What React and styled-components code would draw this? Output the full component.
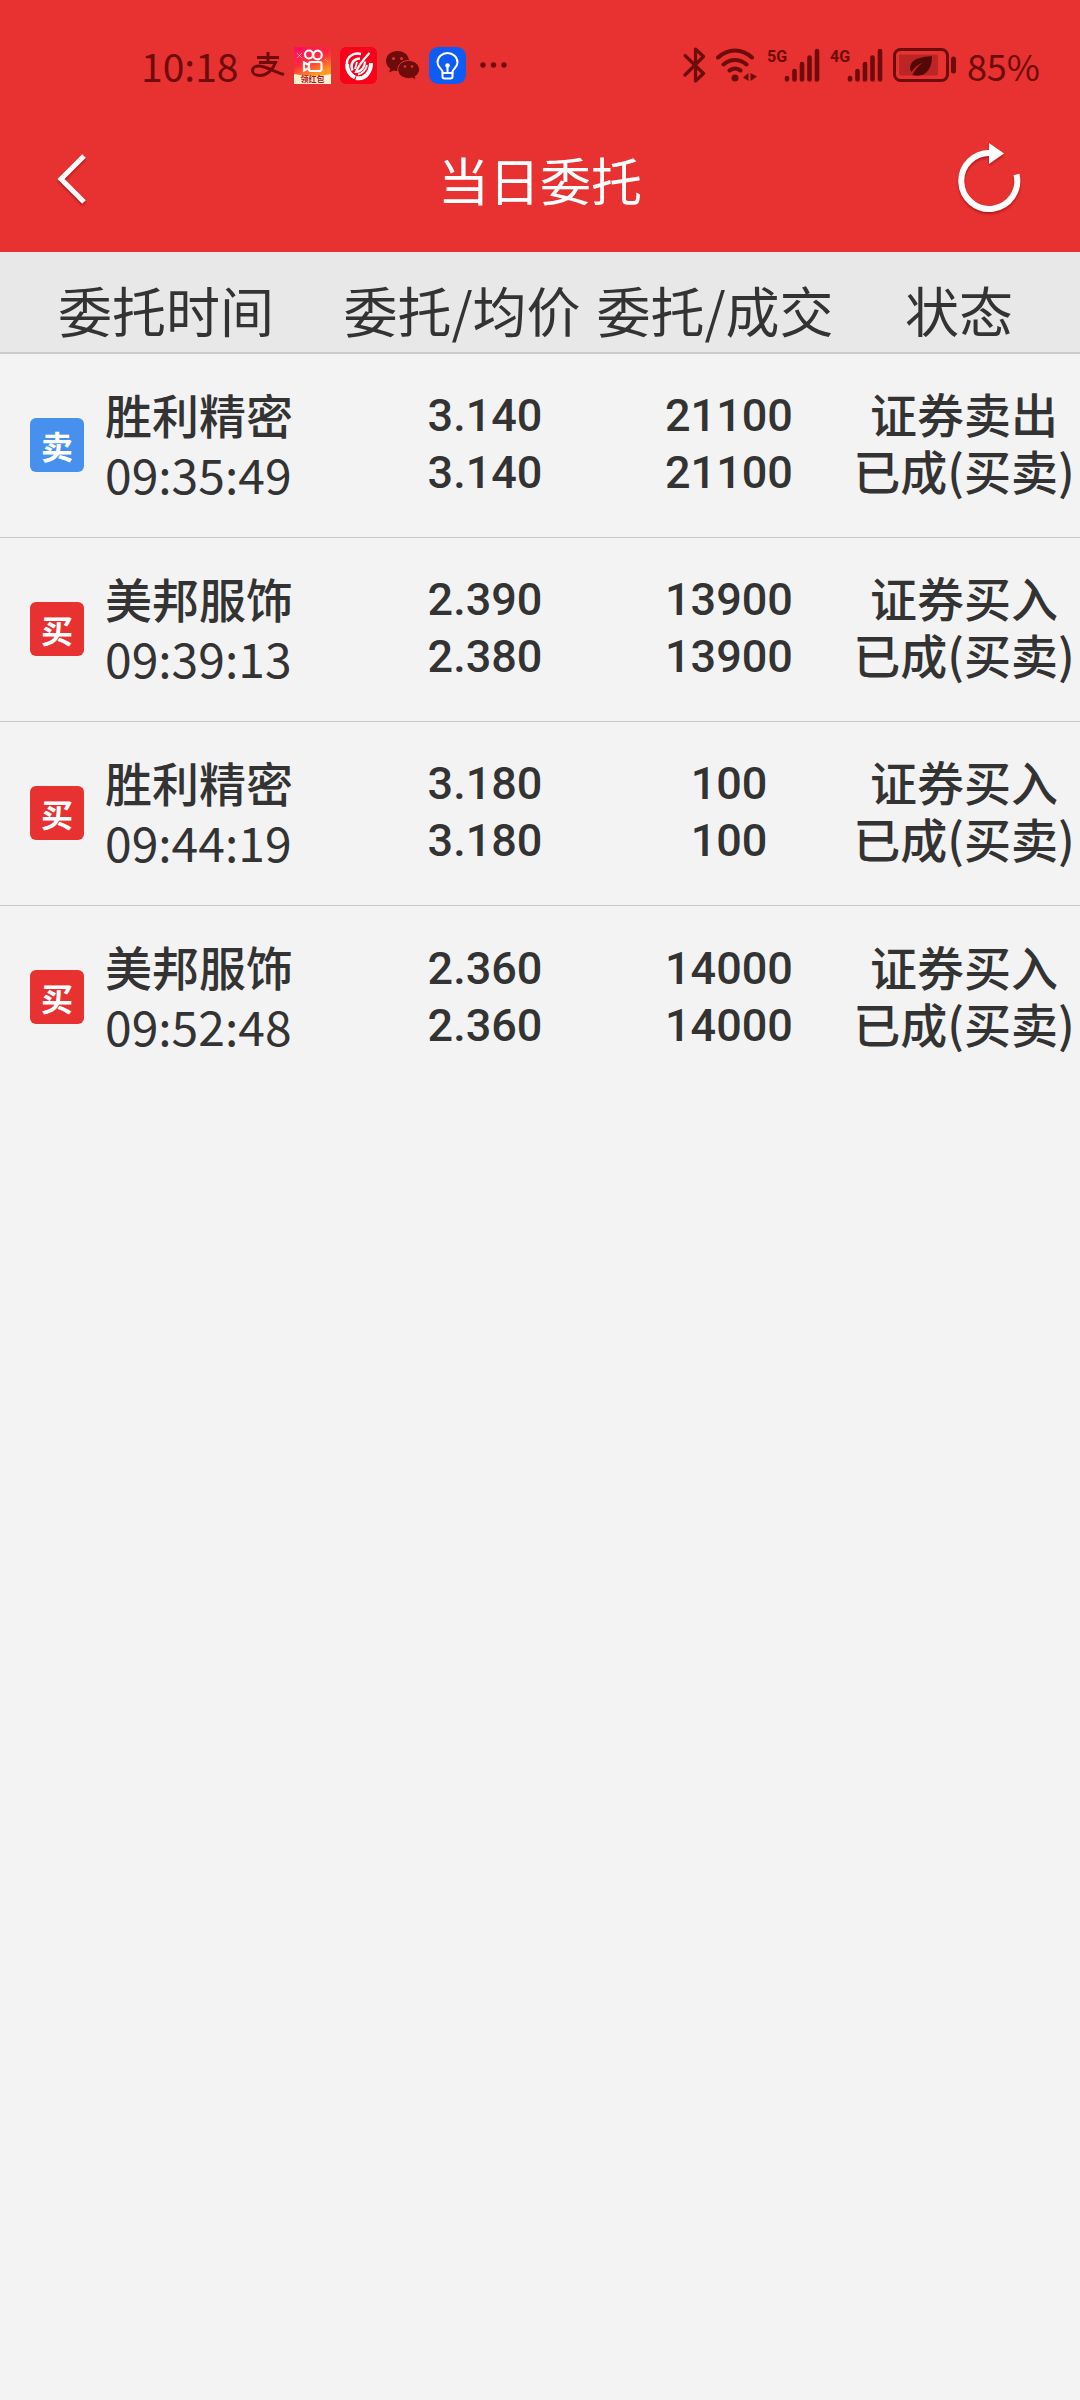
import React from 'react';
import styled, { createGlobalStyle } from 'styled-components';

const INK = '#6e0c0c';

const GlobalStyle = createGlobalStyle`
  * { box-sizing: border-box; }
  body {
    margin: 0;
    min-height: 100vh;
    background: #f3f3f3;
    color: #333;
    font-family: "Noto Sans CJK SC", "Noto Sans", sans-serif;
  }
`;

const TopArea = styled.header`
  background: #e83131;
`;

const StatusBar = styled.div`
  display: flex;
  justify-content: space-between;
  align-items: center;
  height: 112px;
  padding: 18px 40px 0 141px;
  color: ${INK};
`;

const StatusGroup = styled.div`
  display: flex;
  align-items: center;
  gap: ${(p) => p.$gap}px;
`;

const StatusText = styled.span`
  font-size: ${(p) => p.$size}px;
  line-height: 48px;
`;

const Glyph = styled.svg`
  display: block;
  flex: none;
`;

const NavBar = styled.nav`
  display: grid;
  grid-template-columns: 1fr auto 1fr;
  align-items: center;
  height: 140px;
  padding: 0 56px 6px;
`;

const NavButton = styled.button`
  display: flex;
  padding: 0;
  border: 0;
  background: none;
  color: #fff;
  cursor: pointer;
  justify-self: ${(p) => p.$side};
  filter: drop-shadow(0 2px 1px rgba(120, 0, 0, 0.45));
`;

const Title = styled.h1`
  margin: 0;
  color: #fff;
  font-size: 51px;
  font-weight: 400;
  line-height: 64px;
`;

const Orders = styled.table`
  display: block;
  width: 100%;
  border-collapse: collapse;
`;

const Head = styled.thead`
  display: block;
  background: #e8e8e8;
  border-bottom: 2px solid #cbcbcb;
`;

const Body = styled.tbody`
  display: block;
`;

const HeadRow = styled.tr`
  display: grid;
  grid-template-columns: 332fr 260fr 246fr 242fr;
  padding: 18px 0 2px;
`;

const HeadCell = styled.th`
  padding: 0;
  font-size: 54px;
  font-weight: 400;
  line-height: 80px;
  text-align: center;
  white-space: nowrap;
`;

const Row = styled.tr`
  display: grid;
  grid-template-columns: 360fr 250fr 238fr 232fr;
  align-items: center;
  height: 184px;

  &:not(:last-child) {
    border-bottom: 1px solid #c8c8c8;
  }
`;

const StockCell = styled.td`
  display: flex;
  align-items: center;
  gap: 21px;
  padding: 0 0 2px 30px;
`;

const SideBadge = styled.span`
  display: flex;
  align-items: center;
  justify-content: center;
  flex: none;
  width: 54px;
  height: 54px;
  border-radius: 6px;
  background: ${(p) => (p.$sell ? '#4790ee' : '#e83131')};
  color: #fff;
  font-size: 32px;
  font-weight: 700;
  line-height: 50px;
`;

const Stock = styled.div`
  display: flex;
  flex-direction: column;
  padding-bottom: 4px;
  white-space: nowrap;
`;

const Name = styled.span`
  font-size: 47px;
  font-weight: 500;
  line-height: 60px;
`;

const Time = styled.time`
  font-size: 48px;
  line-height: 58px;
`;

const Cell = styled.td`
  display: flex;
  flex-direction: column;
  align-items: center;
  padding: 0;
  font-weight: 500;
  line-height: 57px;
  white-space: nowrap;
`;

const NumberCell = styled(Cell)`
  padding-bottom: 3px;
  font-family: Roboto, sans-serif;
  font-size: 45px;
`;

const StateCell = styled(Cell)`
  padding-bottom: 9px;
  font-size: 47px;
`;

const orders = [
  { sell: true, name: '胜利精密', time: '09:35:49', price: '3.140', avg: '3.140', qty: '21100', done: '21100' },
  { sell: false, name: '美邦服饰', time: '09:39:13', price: '2.390', avg: '2.380', qty: '13900', done: '13900' },
  { sell: false, name: '胜利精密', time: '09:44:19', price: '3.180', avg: '3.180', qty: '100', done: '100' },
  { sell: false, name: '美邦服饰', time: '09:52:48', price: '2.360', avg: '2.360', qty: '14000', done: '14000' },
];

const Alipay = () => (
  <Glyph width="38" height="26" viewBox="-4 0 38 26" fill="none" stroke={INK} strokeWidth="3" aria-hidden="true">
    <path d="M6 5.500H28M17 0V10.500M8 10.500H24.500C22.500 16 17 23.500 8.500 23.500C4.500 23.500 1.500 21.500 1.500 18.500C1.500 15.500 4.500 14 8 14C14 14 22 19 33 22.500" />
  </Glyph>
);

const VideoApp = () => (
  <Glyph width="37" height="37" viewBox="0 0 37 37" aria-hidden="true">
    <defs>
      <linearGradient id="video" x1="0" y1="0" x2="0.4" y2="1">
        <stop offset="0" stopColor="#ff0a66" />
        <stop offset="0.5" stopColor="#ff3038" />
        <stop offset="0.85" stopColor="#ff9a20" />
      </linearGradient>
    </defs>
    <rect width="37" height="37" fill="url(#video)" />
    <path d="M0 27Q18 31 37 27V37H0Z" fill="#fff0cf" />
    <g fill="none" stroke="#fff" strokeWidth="2.200">
      <circle cx="15" cy="7.500" r="4" />
      <circle cx="23.500" cy="8" r="4.300" />
      <rect x="15" y="15" width="12.500" height="9" rx="2" />
      <path d="M15 18L10 15.500V23.500L15 21" />
      <path d="M3 6L8 11M3 11L8 6M31 12L34 15" strokeWidth="0.800" opacity="0.700" />
    </g>
    <text x="18.500" y="35" fill="#b5121b" fontSize="8" fontWeight="700" textAnchor="middle">领红包</text>
  </Glyph>
);

const SwirlApp = () => (
  <Glyph width="37" height="37" viewBox="0 0 37 37" aria-hidden="true">
    <rect width="37" height="37" rx="6" fill="#f9001b" />
    <g fill="none" stroke="#fff">
      <path d="M21 7C12 5 6 11 7 18" strokeWidth="2.500" />
      <path d="M7 17C7 24 10 28 15 30.500" strokeWidth="4" />
      <path d="M16 31C25 33 31 25 31 16" strokeWidth="4" />
      <path d="M20 11.500C13 12 10 17 12.500 23.500" strokeWidth="2.500" />
      <path d="M29.500 6C24 12 19 17 16 25C21 25 25 20 25 14.500" strokeWidth="2.200" />
      <path d="M17 15L15 22M27 18C26 23 22 27 18 27.500" strokeWidth="1.800" />
    </g>
  </Glyph>
);

const WeChat = () => (
  <Glyph width="34" height="29" viewBox="0 0 34 29" aria-hidden="true">
    <path d="M11.500 0C5 0 0 4.300 0 10C0 13.200 1.700 16 4.200 17.800L3.200 21.500L7.500 19.400C8.800 19.800 10 20 11.500 20C18 20 23 15.500 23 10C23 4.300 18 0 11.500 0Z" fill={INK} />
    <path d="M22.500 9.500C16.300 9.500 11.800 13.500 11.800 18.500C11.800 23.600 16.300 27.500 22.500 27.500C23.700 27.500 25 27.300 26 27L30 29L29 25.600C31.800 24 33.500 21.400 33.500 18.500C33.500 13.500 28.800 9.500 22.500 9.500Z" fill={INK} stroke="#e83131" />
    <g fill="#e83131">
      <circle cx="7.500" cy="7.500" r="1.500" />
      <circle cx="15.500" cy="7.500" r="1.500" />
      <circle cx="19" cy="15.500" r="1.300" />
      <circle cx="26" cy="15.500" r="1.300" />
    </g>
  </Glyph>
);

const BulbApp = () => (
  <Glyph width="37" height="37" viewBox="0 0 37 37" aria-hidden="true">
    <rect width="37" height="37" rx="9" fill="#0f5cf5" />
    <g fill="none" stroke="#fff" strokeWidth="2" strokeLinecap="round" strokeLinejoin="round">
      <path d="M13.500 26V24.500C13 22 8.500 20 8.500 15.500A10 9.500 0 0 1 28.500 15.500C28.500 20 24 22 23.500 24.500V26Z" />
      <path d="M18.500 19V25.500M13.500 26V29.500Q13.500 31.500 15.500 31.500H21.500Q23.500 31.500 23.500 29.500V26" />
    </g>
    <circle cx="18.500" cy="18.500" r="2.300" fill="#fff" />
  </Glyph>
);

const More = () => (
  <Glyph width="32" height="6" viewBox="-5 0 32 6" fill={INK} aria-hidden="true">
    <circle cx="3" cy="3" r="2.700" />
    <circle cx="13.500" cy="3" r="2.700" />
    <circle cx="24" cy="3" r="2.700" />
  </Glyph>
);

const Bluetooth = () => (
  <Glyph width="23" height="36" viewBox="0 0 23 36" fill="none" stroke={INK} strokeWidth="3.200" strokeLinecap="round" strokeLinejoin="round" aria-hidden="true">
    <path d="M2 8.500L20.500 26.500L12.500 34V2L20.500 9.500L2 28" />
  </Glyph>
);

const Wifi = () => (
  <Glyph width="41" height="34" viewBox="0 0 41 34" fill="none" stroke={INK} strokeWidth="4" strokeLinecap="round" aria-hidden="true">
    <path d="M2 9.500C12 0 26 0 36 9.500M7.500 16.500C14.500 10.500 23.500 10.500 30.500 16.500M13.500 22.500C17 20 21 20 24.500 22.500" />
    <circle cx="19" cy="30" r="3.500" fill={INK} stroke="none" />
    <path d="M32.500 25V33L27 29.500ZM34.500 25V33L41 28.500Z" fill={INK} stroke="none" />
  </Glyph>
);

const Signal = ({ kind }) => (
  <Glyph width="53" height="35" viewBox="0 0 53 35" role="img" aria-label={`${kind} 信号`}>
    <text x="0" y="14" fill={INK} fontFamily="Roboto, sans-serif" fontSize="16" fontWeight="700">{kind}</text>
    <g stroke={INK} strokeWidth="4.600" strokeLinecap="round">
      <path d="M20 30V31.500M27.500 23V31.500M35 16V31.500M42.500 9.500V31.500M50 3V31.500" />
    </g>
  </Glyph>
);

const Battery = () => (
  <Glyph width="64" height="34" viewBox="0 0 64 34" aria-hidden="true">
    <rect x="1.500" y="1.500" width="53" height="31" rx="6" fill="none" stroke={INK} strokeWidth="3" />
    <rect x="6" y="6.500" width="39" height="21" rx="2" fill="#bd2424" />
    <rect x="58" y="8.500" width="5" height="17" rx="2.500" fill={INK} />
    <path d="M39 8C30 9 20 10 17.500 17C16.500 20 17 22 18.500 24C21 19.500 25 16.500 30 14.500C25 18 21.500 22 19.500 27C31 30 39 23 39 8Z" fill="#540808" />
  </Glyph>
);

const BackIcon = () => (
  <Glyph width="32" height="50" viewBox="0 0 32 50" fill="none" stroke="currentColor" strokeWidth="5" aria-hidden="true">
    <path d="M28 2L5 25L28 48" />
  </Glyph>
);

const RefreshIcon = () => (
  <Glyph width="68" height="76" viewBox="0 0 68 76" aria-hidden="true">
    <path d="M35 12A28 28 0 1 0 60.500 33.500" fill="none" stroke="currentColor" strokeWidth="6" />
    <path d="M33 2L48 12.500L33 23Z" fill="currentColor" />
  </Glyph>
);

export default function App() {
  return (
    <>
      <GlobalStyle />
      <TopArea>
        <StatusBar>
          <StatusGroup $gap={9}>
            <StatusText $size={39}>10:18</StatusText>
            <Alipay />
            <VideoApp />
            <SwirlApp />
            <WeChat />
            <BulbApp />
            <More />
          </StatusGroup>
          <StatusGroup $gap={10}>
            <Bluetooth />
            <Wifi />
            <Signal kind="5G" />
            <Signal kind="4G" />
            <Battery />
            <StatusText $size={36}>85%</StatusText>
          </StatusGroup>
        </StatusBar>
        <NavBar>
          <NavButton type="button" aria-label="返回" $side="start"><BackIcon /></NavButton>
          <Title>当日委托</Title>
          <NavButton type="button" aria-label="刷新" $side="end"><RefreshIcon /></NavButton>
        </NavBar>
      </TopArea>
      <main>
        <Orders>
          <Head>
            <HeadRow>
              <HeadCell scope="col">委托时间</HeadCell>
              <HeadCell scope="col">委托/均价</HeadCell>
              <HeadCell scope="col">委托/成交</HeadCell>
              <HeadCell scope="col">状态</HeadCell>
            </HeadRow>
          </Head>
          <Body>
            {orders.map((o) => (
              <Row key={o.time}>
                <StockCell>
                  <SideBadge $sell={o.sell}>{o.sell ? '卖' : '买'}</SideBadge>
                  <Stock>
                    <Name>{o.name}</Name>
                    <Time>{o.time}</Time>
                  </Stock>
                </StockCell>
                <NumberCell><span>{o.price}</span><span>{o.avg}</span></NumberCell>
                <NumberCell><span>{o.qty}</span><span>{o.done}</span></NumberCell>
                <StateCell><span>{o.sell ? '证券卖出' : '证券买入'}</span><span>已成(买卖)</span></StateCell>
              </Row>
            ))}
          </Body>
        </Orders>
      </main>
    </>
  );
}
